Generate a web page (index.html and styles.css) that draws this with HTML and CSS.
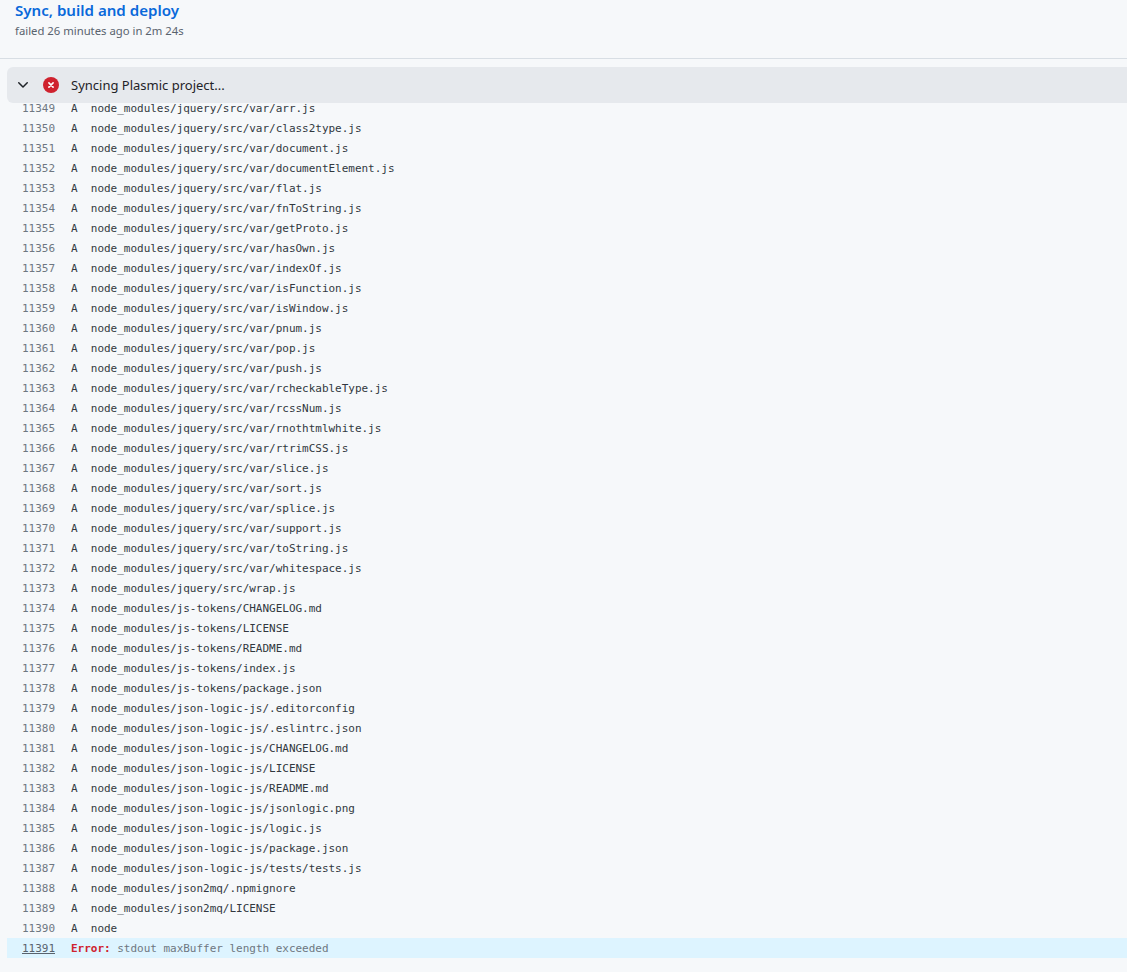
FILE: index.html
```html
<!DOCTYPE html>
<html lang="en">
<head>
<meta charset="utf-8">
<title>Sync, build and deploy</title>
<link rel="stylesheet" href="styles.css">
</head>
<body>
<header class="job-head">
  <h1 class="job-title">Sync, build and deploy</h1>
  <p class="job-meta">failed 26 minutes ago in 2m 24s</p>
</header>
<main class="steps">
  <div class="step-head">
    <svg class="chev" viewBox="0 0 16 16" width="16" height="16"><path d="M12.78 5.22a.749.749 0 0 1 0 1.06l-4.25 4.25a.749.749 0 0 1-1.06 0L3.22 6.28a.749.749 0 1 1 1.06-1.06L8 8.939l3.72-3.719a.749.749 0 0 1 1.06 0Z"/></svg>
    <svg class="fail" viewBox="0 0 16 16" width="16" height="16"><circle cx="8" cy="8" r="8"/><path class="x" d="M5.9 5.9l4.2 4.2M10.1 5.9l-4.2 4.2"/></svg>
    <span class="step-name">Syncing Plasmic project...</span>
  </div>
  <div class="log">
    <div class="row"><span class="num">11349</span><span class="txt">A  node_modules/jquery/src/var/arr.js</span></div>
    <div class="row"><span class="num">11350</span><span class="txt">A  node_modules/jquery/src/var/class2type.js</span></div>
    <div class="row"><span class="num">11351</span><span class="txt">A  node_modules/jquery/src/var/document.js</span></div>
    <div class="row"><span class="num">11352</span><span class="txt">A  node_modules/jquery/src/var/documentElement.js</span></div>
    <div class="row"><span class="num">11353</span><span class="txt">A  node_modules/jquery/src/var/flat.js</span></div>
    <div class="row"><span class="num">11354</span><span class="txt">A  node_modules/jquery/src/var/fnToString.js</span></div>
    <div class="row"><span class="num">11355</span><span class="txt">A  node_modules/jquery/src/var/getProto.js</span></div>
    <div class="row"><span class="num">11356</span><span class="txt">A  node_modules/jquery/src/var/hasOwn.js</span></div>
    <div class="row"><span class="num">11357</span><span class="txt">A  node_modules/jquery/src/var/indexOf.js</span></div>
    <div class="row"><span class="num">11358</span><span class="txt">A  node_modules/jquery/src/var/isFunction.js</span></div>
    <div class="row"><span class="num">11359</span><span class="txt">A  node_modules/jquery/src/var/isWindow.js</span></div>
    <div class="row"><span class="num">11360</span><span class="txt">A  node_modules/jquery/src/var/pnum.js</span></div>
    <div class="row"><span class="num">11361</span><span class="txt">A  node_modules/jquery/src/var/pop.js</span></div>
    <div class="row"><span class="num">11362</span><span class="txt">A  node_modules/jquery/src/var/push.js</span></div>
    <div class="row"><span class="num">11363</span><span class="txt">A  node_modules/jquery/src/var/rcheckableType.js</span></div>
    <div class="row"><span class="num">11364</span><span class="txt">A  node_modules/jquery/src/var/rcssNum.js</span></div>
    <div class="row"><span class="num">11365</span><span class="txt">A  node_modules/jquery/src/var/rnothtmlwhite.js</span></div>
    <div class="row"><span class="num">11366</span><span class="txt">A  node_modules/jquery/src/var/rtrimCSS.js</span></div>
    <div class="row"><span class="num">11367</span><span class="txt">A  node_modules/jquery/src/var/slice.js</span></div>
    <div class="row"><span class="num">11368</span><span class="txt">A  node_modules/jquery/src/var/sort.js</span></div>
    <div class="row"><span class="num">11369</span><span class="txt">A  node_modules/jquery/src/var/splice.js</span></div>
    <div class="row"><span class="num">11370</span><span class="txt">A  node_modules/jquery/src/var/support.js</span></div>
    <div class="row"><span class="num">11371</span><span class="txt">A  node_modules/jquery/src/var/toString.js</span></div>
    <div class="row"><span class="num">11372</span><span class="txt">A  node_modules/jquery/src/var/whitespace.js</span></div>
    <div class="row"><span class="num">11373</span><span class="txt">A  node_modules/jquery/src/wrap.js</span></div>
    <div class="row"><span class="num">11374</span><span class="txt">A  node_modules/js-tokens/CHANGELOG.md</span></div>
    <div class="row"><span class="num">11375</span><span class="txt">A  node_modules/js-tokens/LICENSE</span></div>
    <div class="row"><span class="num">11376</span><span class="txt">A  node_modules/js-tokens/README.md</span></div>
    <div class="row"><span class="num">11377</span><span class="txt">A  node_modules/js-tokens/index.js</span></div>
    <div class="row"><span class="num">11378</span><span class="txt">A  node_modules/js-tokens/package.json</span></div>
    <div class="row"><span class="num">11379</span><span class="txt">A  node_modules/json-logic-js/.editorconfig</span></div>
    <div class="row"><span class="num">11380</span><span class="txt">A  node_modules/json-logic-js/.eslintrc.json</span></div>
    <div class="row"><span class="num">11381</span><span class="txt">A  node_modules/json-logic-js/CHANGELOG.md</span></div>
    <div class="row"><span class="num">11382</span><span class="txt">A  node_modules/json-logic-js/LICENSE</span></div>
    <div class="row"><span class="num">11383</span><span class="txt">A  node_modules/json-logic-js/README.md</span></div>
    <div class="row"><span class="num">11384</span><span class="txt">A  node_modules/json-logic-js/jsonlogic.png</span></div>
    <div class="row"><span class="num">11385</span><span class="txt">A  node_modules/json-logic-js/logic.js</span></div>
    <div class="row"><span class="num">11386</span><span class="txt">A  node_modules/json-logic-js/package.json</span></div>
    <div class="row"><span class="num">11387</span><span class="txt">A  node_modules/json-logic-js/tests/tests.js</span></div>
    <div class="row"><span class="num">11388</span><span class="txt">A  node_modules/json2mq/.npmignore</span></div>
    <div class="row"><span class="num">11389</span><span class="txt">A  node_modules/json2mq/LICENSE</span></div>
    <div class="row"><span class="num">11390</span><span class="txt">A  node</span></div>
    <div class="row row-error"><span class="num num-link">11391</span><span class="txt txt-muted"><b class="err">Error:</b> stdout maxBuffer length exceeded</span></div>
  </div>
</main>
</body>
</html>
```
FILE: styles.css
```css
* { box-sizing: border-box; }
html, body { margin: 0; padding: 0; overflow: hidden; }
body {
  width: 1127px;
  height: 972px;
  background: #f6f8fa;
  font-family: "Noto Sans", "Open Sans", sans-serif;
  color: #1f2328;
}
.job-head {
  height: 59px;
  padding: 0 15px;
  border-bottom: 1px solid #d8dee4;
}
.job-title {
  margin: 0;
  font-size: 15.1px;
  line-height: 21px;
  font-weight: 600;
  color: #0969da;
}
.job-meta {
  margin: 0;
  font-size: 11.3px;
  line-height: 20px;
  color: #59636e;
}
.steps { padding: 8px 0 0 7px; }
.step-head {
  position: relative;
  z-index: 1;
  display: flex;
  align-items: center;
  height: 36px;
  padding-left: 8px;
  background: #e6e9ed;
  border-radius: 6px 0 0 6px;
}
.chev { fill: #1f2328; flex: none; }
.fail { margin-left: 12px; flex: none; }
.fail circle { fill: #cf222e; }
.fail .x { stroke: #fff; stroke-width: 1.6; stroke-linecap: round; fill: none; }
.step-name { margin-left: 12px; font-size: 13px; color: #1f2328; }
.log {
  margin-top: -5px;
  font-family: "DejaVu Sans Mono", "Liberation Mono", monospace;
  font-size: 11px;
  letter-spacing: -0.02px;
}
.row {
  display: flex;
  height: 20px;
  line-height: 22px;
  white-space: pre;
}
.num {
  flex: none;
  width: 48px;
  text-align: right;
  color: #6e7781;
}
.txt { margin-left: 16px; color: #32383f; }
.row-error { background: #ddf4ff; }
.num-link { text-decoration: underline; color: #59636e; }
.txt-muted { color: #6e7781; }
.err { color: #cf222e; font-weight: 700; }
```
